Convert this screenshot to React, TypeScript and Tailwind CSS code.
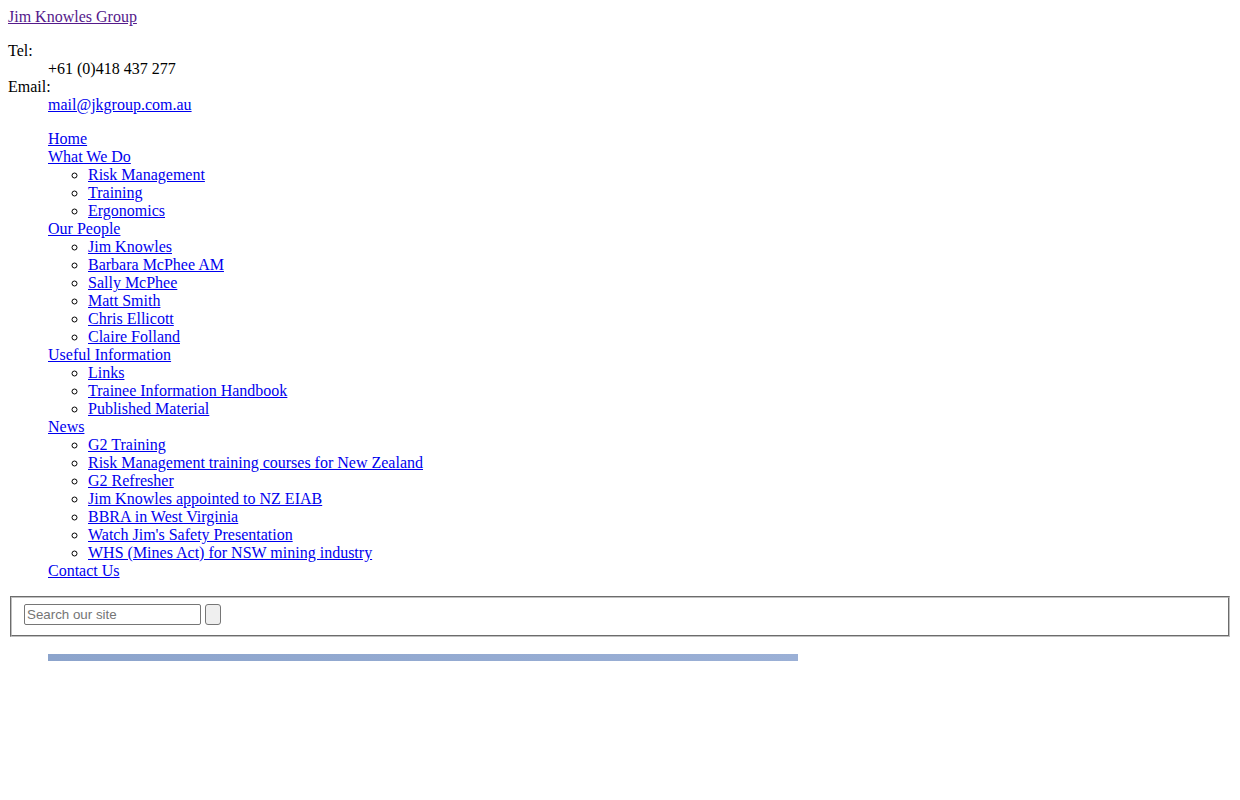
import React from 'react';

type NavItem = { label: string; children?: string[] };

const nav: NavItem[] = [
  { label: 'Home' },
  { label: 'What We Do', children: ['Risk Management', 'Training', 'Ergonomics'] },
  {
    label: 'Our People',
    children: ['Jim Knowles', 'Barbara McPhee AM', 'Sally McPhee', 'Matt Smith', 'Chris Ellicott', 'Claire Folland'],
  },
  { label: 'Useful Information', children: ['Links', 'Trainee Information Handbook', 'Published Material'] },
  {
    label: 'News',
    children: [
      'G2 Training',
      'Risk Management training courses for New Zealand',
      'G2 Refresher',
      'Jim Knowles appointed to NZ EIAB',
      'BBRA in West Virginia',
      "Watch Jim's Safety Presentation",
      'WHS (Mines Act) for NSW mining industry',
    ],
  },
  { label: 'Contact Us' },
];

const link = 'text-[#0000ee] underline';

const App: React.FC = () => {
  return (
    <div className="bg-white min-h-[800px] p-2 text-black text-[16px] leading-[18px] font-['Liberation_Serif',serif]">
      <a href="#" className="text-[#551a8b] underline">Jim Knowles Group</a>

      <dl className="my-4">
        <dt>Tel:</dt>
        <dd className="ml-10">+61 (0)418 437 277</dd>
        <dt>Email:</dt>
        <dd className="ml-10">
          <a href="#" className={link}>mail@jkgroup.com.au</a>
        </dd>
      </dl>

      <ul className="my-4 pl-10 list-none">
        {nav.map(item => (
          <li key={item.label}>
            <a href="#" className={link}>{item.label}</a>
            {item.children && (
              <ul className="pl-10 list-[circle]">
                {item.children.map(c => (
                  <li key={c}>
                    <a href="#" className={link}>{c}</a>
                  </li>
                ))}
              </ul>
            )}
          </li>
        ))}
      </ul>

      <form className="mx-[2px]" onSubmit={e => e.preventDefault()}>
        <fieldset className="border-2 [border-style:groove] border-[#c0c0c0] pt-[6px] pb-[10px] px-3 flex items-center gap-1">
          <input
            type="text"
            placeholder="Search our site"
            className="w-[177px] h-[21px] border border-[#767676] rounded-[2px] px-[2px] text-[13.33px] font-['Liberation_Sans',Arial,sans-serif] placeholder:text-[#757575]"
          />
          <button type="submit" className="w-[16px] h-[21px] bg-[#efefef] border border-[#767676] rounded-[3px]" />
        </fieldset>
      </form>

      {/* divider strip under the search box */}
      <div className="ml-10 mt-[17px] w-[750px] h-[7px] bg-gradient-to-r from-[#8ca4cc] to-[#9bb0d6]" />
    </div>
  );
};

export default App;
